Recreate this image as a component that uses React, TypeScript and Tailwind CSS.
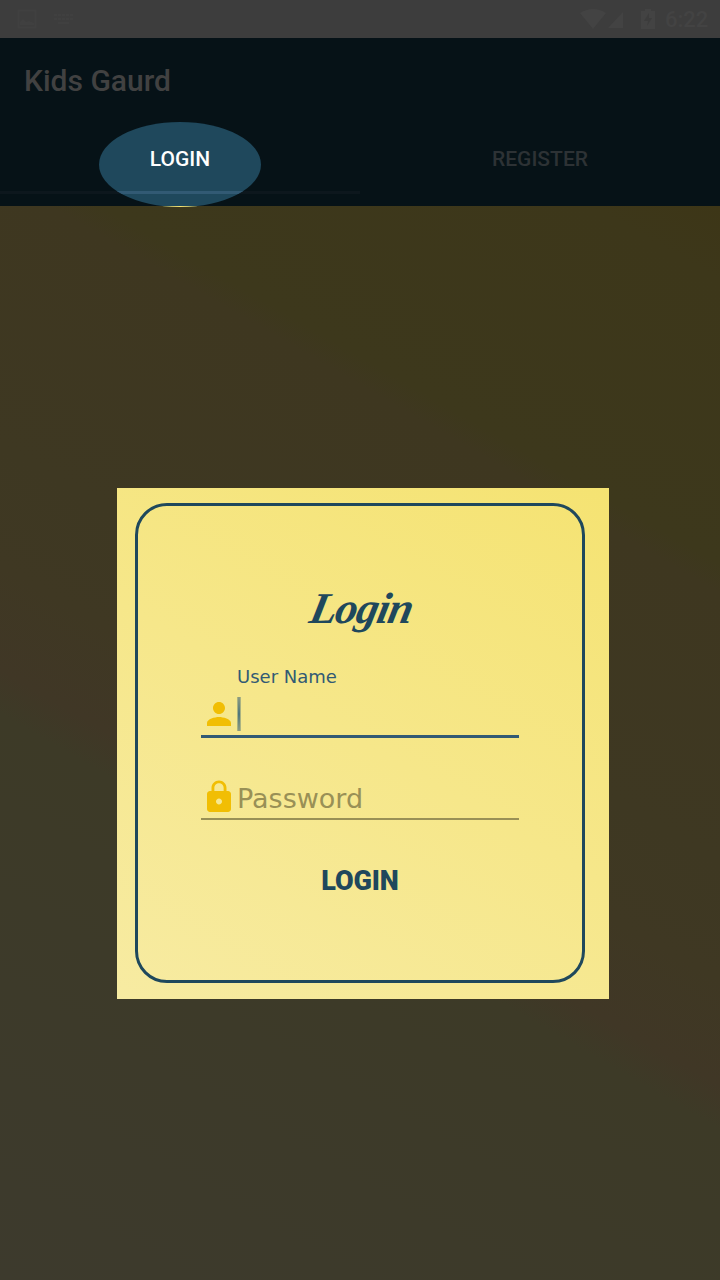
import React from "react";

function StatusBar() {
  return (
    <div className="flex h-[38px] shrink-0 items-center bg-[#3d3d3d] pl-[17px] pr-[12px] text-[#434343]">
      <svg className="text-[#404040]" width="20" height="20" viewBox="0 0 20 20" fill="none">
        <path d="M1.5 1.5h17v17h-17z" stroke="currentColor" strokeWidth="2" />
        <path d="M3 16V13l3-3 3 3 3-1 5 2v2z" fill="currentColor" />
      </svg>
      <svg className="ml-[16px] text-[#404040]" width="21" height="12" viewBox="0 0 21 12" fill="none" stroke="currentColor" strokeWidth="2">
        <path d="M1 2h19M1 6h19" strokeDasharray="3 1" />
        <path d="M5 10h11" />
      </svg>
      <span className="flex-1" />
      <svg width="26" height="21" viewBox="0 0 26 21" fill="currentColor">
        <path d="M0 4Q13-4 26 4L13 20z" />
      </svg>
      <svg className="ml-[2px]" width="22" height="20" viewBox="0 0 22 20" fill="currentColor">
        <path d="M0 19L15 3v16z" />
        <path d="M16 0h5v19h-5z" opacity=".2" />
      </svg>
      <svg className="ml-[11px]" width="14" height="20" viewBox="0 0 14 20">
        <path d="M0 2h4V0h6v2h4v18H0z" fill="currentColor" />
        <path d="M8 4L3 12h4l-1 5 5-8H8z" fill="#3c3c3c" />
      </svg>
      <span className="ml-[10px] mt-[2px] w-[43px] font-[Roboto] text-[22px] font-medium leading-none">6:22</span>
    </div>
  );
}

function Header() {
  return (
    <header className="flex h-[168px] shrink-0 flex-col bg-[#061217] font-[Roboto] font-medium">
      <h1 className="h-[84px] pl-[24px] text-[30px] font-medium leading-[86px] text-[#414141]">Kids Gaurd</h1>
      <nav className="grid flex-1 grid-cols-2 text-center text-[21px] leading-[74px]">
        <div className="relative">
          <div className="absolute left-0 top-[69px] h-[3px] w-full bg-[#0d171d]" />
          <div className="absolute left-[99px] top-0 h-[85px] w-[162px] overflow-hidden rounded-[50%] bg-[#1f485c]">
            <div className="absolute left-0 top-[69px] h-[3px] w-full bg-[#325a74]" />
            <div className="absolute left-0 top-[84px] h-px w-full bg-[#f5e372]" />
          </div>
          <span className="relative text-white">LOGIN</span>
        </div>
        <div className="text-[#2d3235]">REGISTER</div>
      </nav>
    </header>
  );
}

function LoginCard() {
  return (
    <section className="ml-[117px] mt-[282px] h-[511px] w-[492px] bg-[linear-gradient(210deg,#f5e372,#f7eba2)] pl-[18px] pt-[15px]">
      <div className="flex h-[480px] w-[450px] flex-col rounded-[32px] border-[3px] border-[#1f485c] px-[63px]">
        <h2 className="ml-[109px] mt-[76px] h-[60px] w-[110px] origin-left -skew-x-12 whitespace-nowrap font-['Liberation_Serif'] text-[44px] font-bold italic leading-[54px] tracking-[-1.2px] text-[#1f485c]">Login</h2>
        <label className="ml-[36px] mt-[22px] h-[30px] font-['DejaVu_Sans'] text-[18px] leading-[26px] text-[#325a74]">User Name</label>
        <div className="flex h-[44px] border-b-[3px] border-[#325a74]">
          <svg className="mt-[2px]" width="36" height="36" viewBox="0 0 24 24" fill="#f1be04">
            <path d="M12 12c2.21 0 4-1.79 4-4s-1.79-4-4-4-4 1.79-4 4 1.79 4 4 4zm0 2c-2.67 0-8 1.34-8 4v2h16v-2c0-2.66-5.33-4-8-4z" />
          </svg>
          <span className="mt-[3px] h-[34px] w-[4px] border-x border-[#aab383] bg-[linear-gradient(#8f9c80,#4f767b,#8f9c80)]" />
        </div>
        <div className="mt-[38px] flex h-[44px] border-b-2 border-[#999056]">
          <svg className="mt-[3px]" width="36" height="36" viewBox="0 0 24 24" fill="#f1be04">
            <path d="M18 8h-1V6c0-2.76-2.24-5-5-5S7 3.24 7 6v2H6c-1.1 0-2 .9-2 2v10c0 1.1.9 2 2 2h12c1.1 0 2-.9 2-2V10c0-1.1-.9-2-2-2zm-6 9c-1.1 0-2-.9-2-2s.9-2 2-2 2 .9 2 2-.9 2-2 2zm3.1-9H8.9V6c0-1.71 1.39-3.1 3.1-3.1s3.1 1.39 3.1 3.1z" />
          </svg>
          <span className="font-['DejaVu_Sans'] text-[27px] leading-[46px] text-[#999056]">Password</span>
        </div>
        <button className="mt-[42px] h-[38px] font-[Roboto] text-[27px] font-black leading-[38px] tracking-[-0.1px] text-[#1f485c]">LOGIN</button>
      </div>
    </section>
  );
}

export default function App() {
  return (
    <div className="flex h-[1280px] w-[720px] flex-col overflow-hidden">
      <StatusBar />
      <Header />
      <main className="flex flex-1 flex-col bg-[linear-gradient(210deg,#3d3617_0%,#3d371a_5%,#3d381c_24%,#3e3720_26%,#3e3822_44%,#3f3823_52%,#403726_59%,#3d3a27_62%,#3d3a2a_80%,#3d3a2d_100%)]">
        <LoginCard />
      </main>
    </div>
  );
}
